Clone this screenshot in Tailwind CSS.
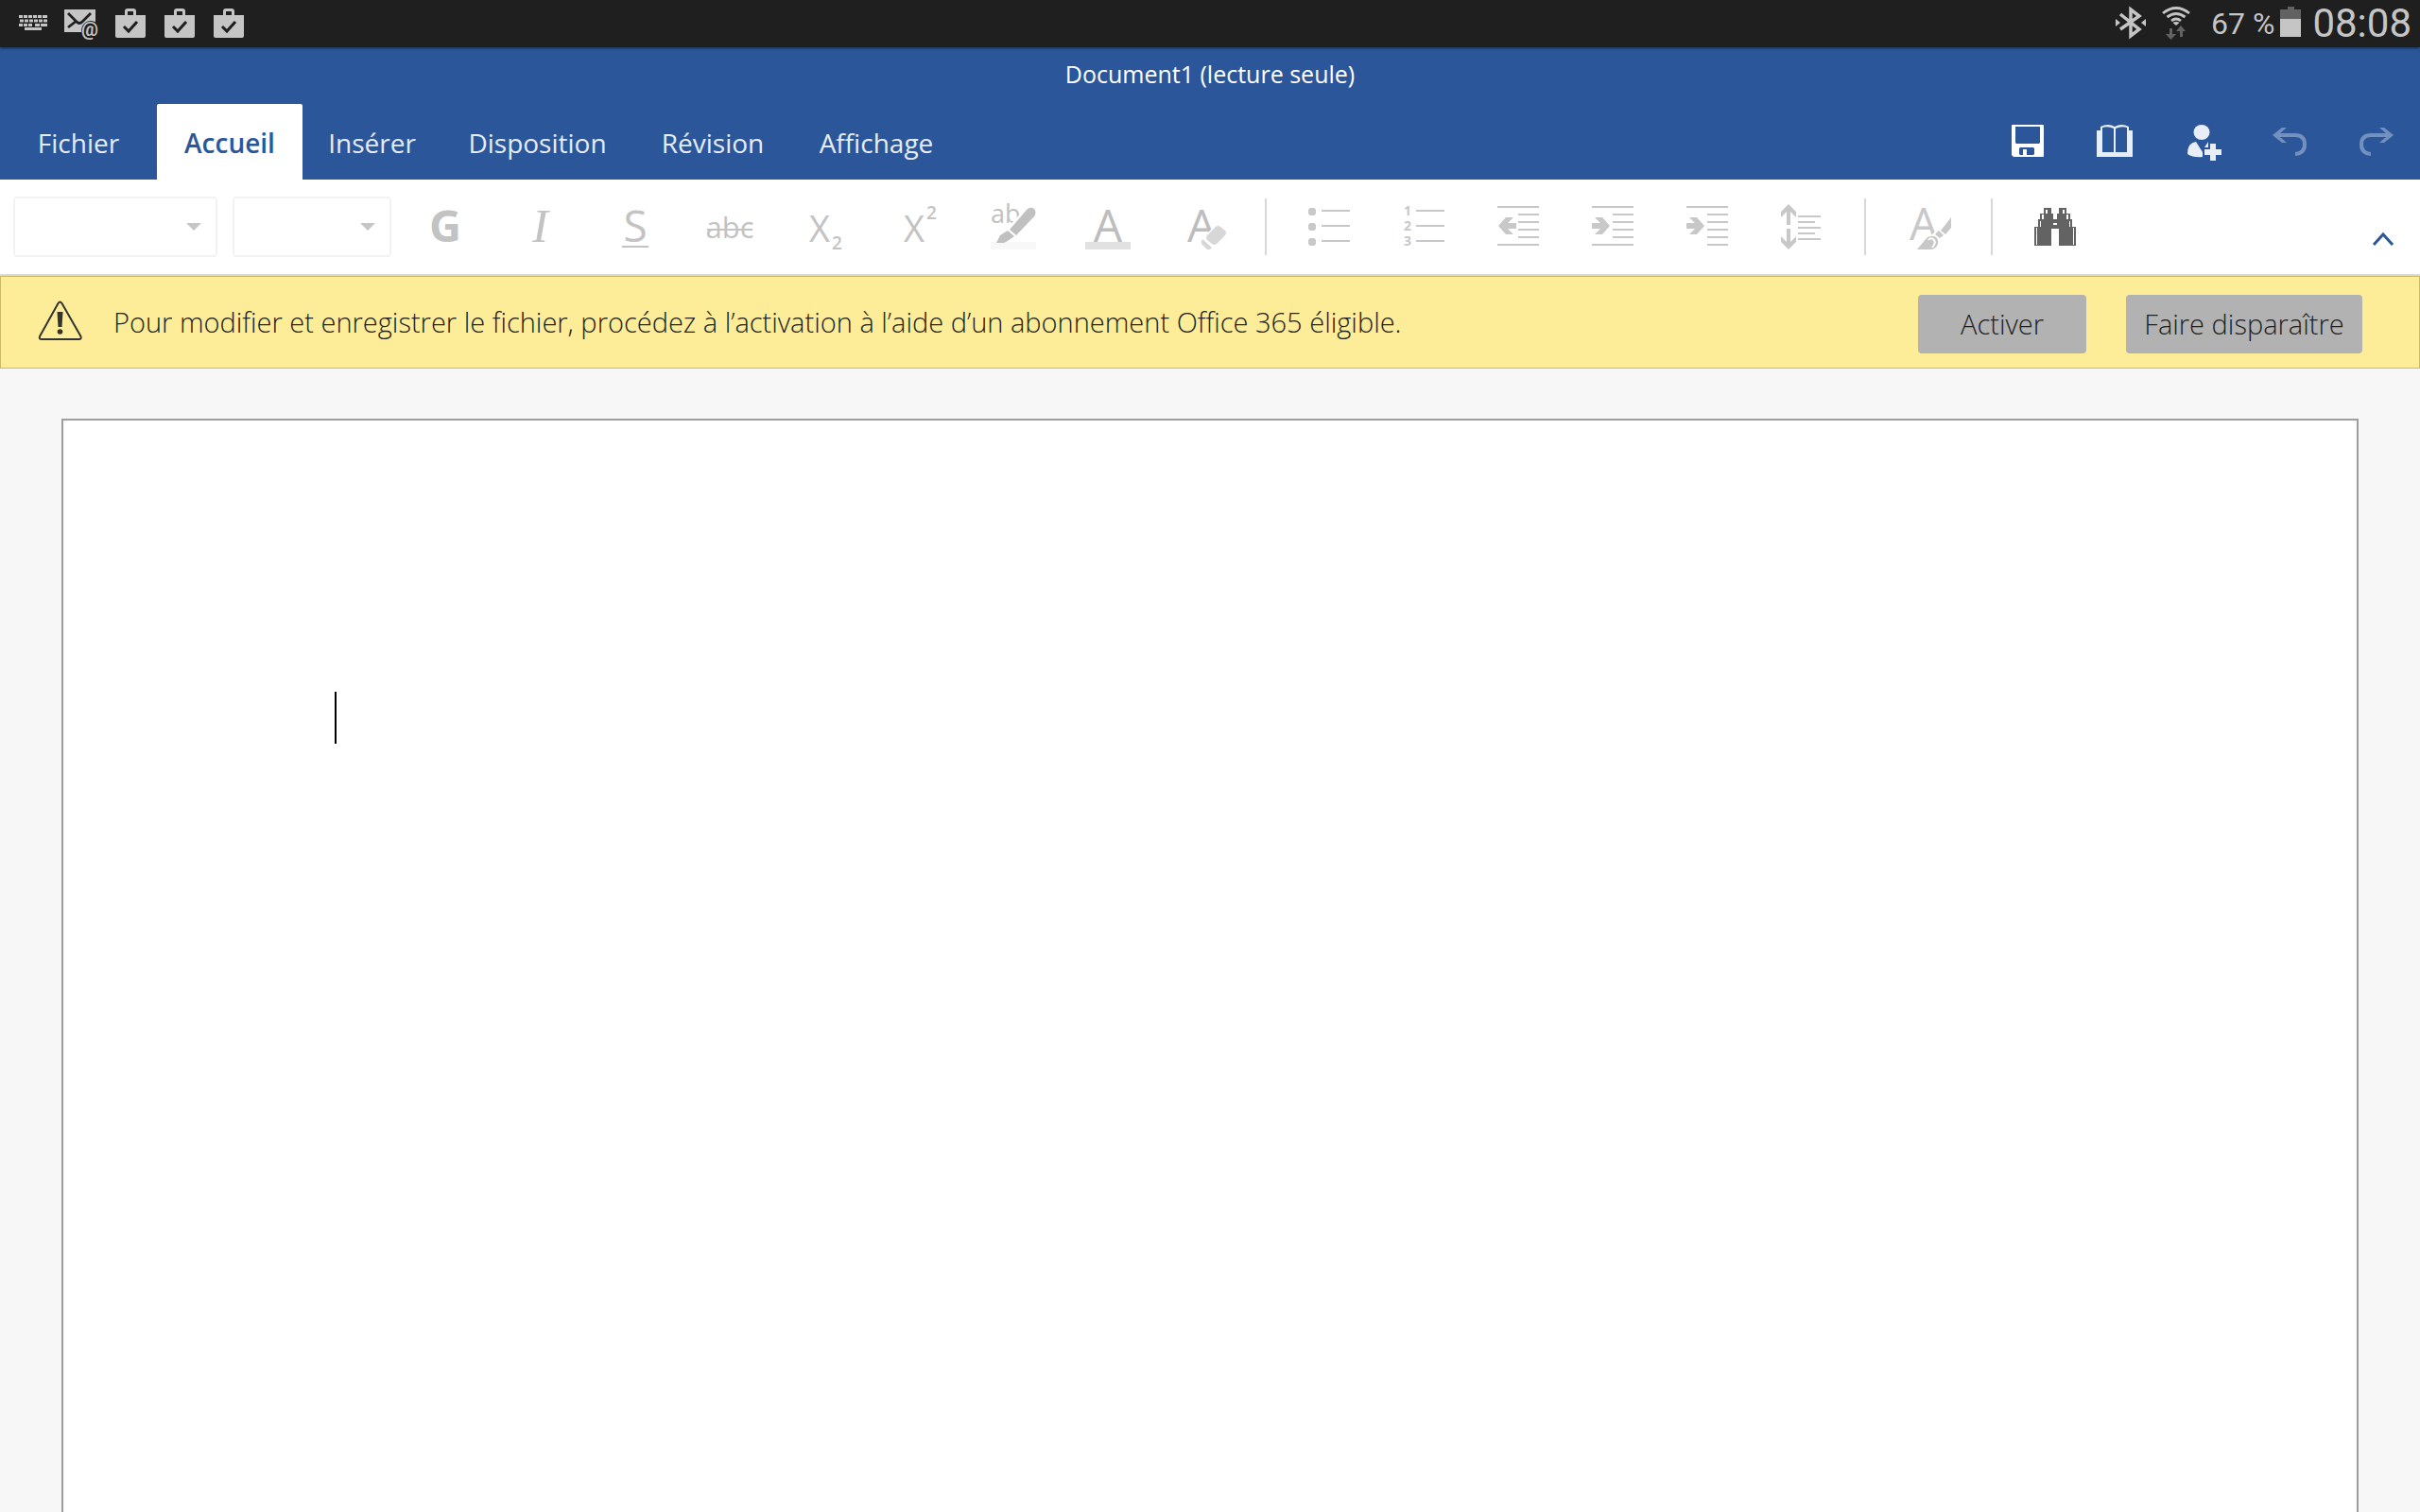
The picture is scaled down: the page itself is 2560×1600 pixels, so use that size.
<!DOCTYPE html>
<html lang="fr">
<head>
<meta charset="utf-8">
<meta name="viewport" content="width=device-width, initial-scale=1">
<title>Document1 (lecture seule)</title>
<script src="https://cdn.jsdelivr.net/npm/@tailwindcss/browser@4"></script>
</head>
<body class="flex min-h-screen flex-col bg-[#f7f7f7] font-['Open_Sans',sans-serif]">

<svg class="hidden">
  <symbol id="bag" viewBox="0 0 32 32">
    <path fill="#c5c5c5" fill-rule="evenodd" d="M10 7V3q0-3 3-3h6q3 0 3 3v4h10v22q0 2-2 2H2q-2 0-2-2V7zM13 7h6V3h-6z"/>
    <path fill="none" stroke="#1f1f1f" stroke-width="3" d="M9 19l5 5 9-10"/>
  </symbol>
  <symbol id="shortlines" viewBox="0 0 100 100">
    <path d="M28 28h44v2H28zM50 36h22v2H50zM50 44h22v2H50zM50 52h22v2H50zM50 60h22v2H50z"/>
  </symbol>
</svg>

<!-- Android status bar -->
<div class="relative z-10 flex h-[50px] items-center justify-between bg-[#1f1f1f] pl-5 pr-[9px] font-[Roboto,sans-serif] text-[#c5c5c5] shadow-[0_1px_3px_rgba(0,0,0,0.5)]">
  <div class="flex items-center gap-[18px]">
    <svg class="h-[50px] w-[30px]" viewBox="0 0 30 50" fill="none" stroke="#c5c5c5">
      <path stroke-width="3" stroke-dasharray="4 1" d="M0 17.500h19M1 22h24M0 26.500h14"/>
      <path stroke-width="3" d="M20 17.500h4M25 17.500h5M26 22h4M17 26.500h5M23 26.500h7M6 30.500h18"/>
    </svg>
    <svg class="h-[50px] w-[36px]" viewBox="0 0 36 50">
      <path fill="#c5c5c5" d="M0 10h33v24H0z"/>
      <path fill="none" stroke="#1f1f1f" stroke-width="2.800" d="M4 14l9 9q3 3 6 0l9-9M4 29l9-7"/>
      <circle cx="28" cy="32" r="10" fill="#1f1f1f"/>
      <text x="27" y="38" text-anchor="middle" font-size="20" font-weight="700" fill="#c5c5c5">@</text>
    </svg>
    <div class="flex gap-5">
      <svg class="h-8 w-8"><use href="#bag"/></svg>
      <svg class="h-8 w-8"><use href="#bag"/></svg>
      <svg class="h-8 w-8"><use href="#bag"/></svg>
    </div>
  </div>
  <div class="flex items-center">
    <svg class="mr-[17px] h-[50px] w-[32px]" viewBox="0 0 32 50">
      <path fill="none" stroke="#c5c5c5" stroke-width="3.500" d="M5 15l20 16-9 7V10l9 7L5 31"/>
      <path fill="#c5c5c5" d="M0 20l5 4-5 4zM32 20l-5 4 5 4z"/>
    </svg>
    <svg class="mr-[22px] h-[50px] w-[30px]" viewBox="0 0 30 50">
      <path fill="none" stroke="#c5c5c5" stroke-width="2.800" d="M1 14q14-11 28 0M5.500 18q9.500-7 19 0M10 22q5-4 10 0"/>
      <path fill="#c5c5c5" d="M11.500 24q3.500-2 7 0L15 27z"/>
      <path fill="#626262" d="M8 30h3v6h4l-5.500 6L4 36h4zM19 39v-6h-4l5-6 5 6h-3v6z"/>
    </svg>
    <span class="mr-[6px] text-[32px] leading-[50px]">67 %</span>
    <svg class="mr-[12px] h-[50px] w-[22px]" viewBox="0 0 22 50">
      <path fill="#626262" d="M8 7h7v3h7v10H0V10h8z"/>
      <path fill="#c5c5c5" d="M0 20h22v19H0z"/>
    </svg>
    <span class="text-[42px] leading-[48px]">08:08</span>
  </div>
</div>

<!-- Title and ribbon tabs -->
<header class="bg-[#2b579a]">
  <h1 class="h-[60px] text-center text-[25px] leading-[56px] text-white">Document1 (lecture seule)</h1>
  <div class="flex h-20 items-stretch justify-between">
    <nav class="flex text-[28px] leading-[82px] text-[#e6ecf6]">
      <a href="#" class="w-[166px] text-center">Fichier</a>
      <a href="#" class="w-[154px] rounded-t-xs bg-white text-center font-semibold text-[#2b579a]" aria-current="page">Accueil</a>
      <a href="#" class="w-[147px] text-center">Insérer</a>
      <a href="#" class="w-[203px] text-center">Disposition</a>
      <a href="#" class="w-[168px] text-center">Révision</a>
      <a href="#" class="w-[178px] text-center">Affichage</a>
    </nav>
    <div class="flex">
      <button class="w-[92px]" aria-label="Enregistrer"><svg class="h-20 w-[92px]" viewBox="0 0 92 80">
        <path fill="#fff" fill-rule="evenodd" d="M29 22h32q1 0 1 1v32q0 1-1 1H30l-2-2V23q0-1 1-1zM32 24v17l1 1h24l1-1V24zM37 46l-1 1v6l1 1h3v-6h4v6h7l1-1v-6l-1-1z"/>
      </svg></button>
      <button class="w-[92px]" aria-label="Mode lecture"><svg class="h-20 w-[92px]" viewBox="0 0 92 80">
        <path fill="#e8eef8" fill-rule="evenodd" d="M26 28h4v-4q8-4 15 0 7-4 15 0v4h4v28H26zM32 25v26h12V26q-6-3-12-1zM46 26v25h12V25q-6-2-12 1z"/>
      </svg></button>
      <button class="w-[92px]" aria-label="Partager"><svg class="h-20 w-[92px]" viewBox="0 0 92 80">
        <g fill="#e8eef8"><ellipse cx="45" cy="30" rx="8.500" ry="8"/>
        <path d="M39 40l7 11v5q-10 1-16-3 0-12 9-13zM52 40v6h-4zM54 42h6v6h6v6h-6v6h-6v-6h-6v-6h6z"/></g>
      </svg></button>
      <button class="w-[92px]" aria-label="Annuler" disabled><svg class="h-20 w-[92px]" viewBox="0 0 92 80">
        <path fill="#7390bf" d="M28 33l10-8h5l-7 6h16q12 0 12 12 0 11-12 12v-4q8-1 8-8 0-8-8-8H36l7 6h-5z"/>
      </svg></button>
      <button class="w-[92px]" aria-label="Rétablir" disabled><svg class="h-20 w-[92px]" viewBox="0 0 92 80">
        <path fill="#7390bf" d="M64 33l-10-8h-5l7 6H40q-12 0-12 12 0 11 12 12v-4q-8-1-8-8 0-8 8-8h16l-7 6h5z"/>
      </svg></button>
    </div>
  </div>
</header>

<!-- Formatting toolbar -->
<div class="flex h-[102px] items-center border-b-2 border-[#d8d8d8] bg-white pl-[14px]">
  <div class="relative mr-4 h-16 w-[216px]">
    <select class="h-full w-full appearance-none rounded-sm border-2 border-[#f2f2f2] bg-white" aria-label="Police" disabled></select>
    <svg class="pointer-events-none absolute right-[17px] top-7 h-2 w-4" viewBox="0 0 16 8"><path fill="#c6c6c6" d="M0 0h16L8 8z"/></svg>
  </div>
  <div class="relative mr-2 h-16 w-[168px]">
    <select class="h-full w-full appearance-none rounded-sm border-2 border-[#f2f2f2] bg-white" aria-label="Taille de police" disabled></select>
    <svg class="pointer-events-none absolute right-[17px] top-7 h-2 w-4" viewBox="0 0 16 8"><path fill="#c6c6c6" d="M0 0h16L8 8z"/></svg>
  </div>
  <div class="flex" role="group" aria-label="Police">
    <button aria-label="Gras" disabled><svg class="size-[100px]" viewBox="0 0 100 100" fill="#c3c3c3"><text x="32" y="66" font-size="47" font-weight="700">G</text></svg></button>
    <button aria-label="Italique" disabled><svg class="size-[100px] font-['Liberation_Serif',serif]" viewBox="0 0 100 100" fill="#c3c3c3"><text x="41" y="66" font-size="51" font-style="italic">I</text></svg></button>
    <button aria-label="Souligné" disabled><svg class="size-[100px]" viewBox="0 0 100 100" fill="#c3c3c3"><text x="50" y="66" text-anchor="middle" font-size="46">S</text><path d="M36 70h28v2H36z"/></svg></button>
    <button aria-label="Barré" disabled><svg class="size-[100px]" viewBox="0 0 100 100" fill="#c3c3c3"><text x="50" y="62" text-anchor="middle" font-size="31">abc</text><path d="M26 52h48v2H26z"/></svg></button>
    <button aria-label="Indice" disabled><svg class="size-[100px]" viewBox="0 0 100 100" fill="#c3c3c3"><text x="45" y="66" text-anchor="middle" font-size="38">X</text><text x="58" y="74" font-size="19" font-weight="600">2</text></svg></button>
    <button aria-label="Exposant" disabled><svg class="size-[100px]" viewBox="0 0 100 100" fill="#c3c3c3"><text x="45" y="66" text-anchor="middle" font-size="38">X</text><text x="58" y="42" font-size="19" font-weight="600">2</text></svg></button>
    <button aria-label="Surlignage" disabled><svg class="size-[100px]" viewBox="0 0 100 100" fill="#c0c0c0">
      <text x="26" y="46" font-size="27">ab</text>
      <path fill="#f8f8f8" d="M26 66h48v8H26z"/>
      <path fill="#fff" d="M43 52L62 31h8v10L50 60z"/>
      <path d="M46 53L64 32q4-4 8-1 3 4 0 8L53 59zM44 54l7 6-7 5-4 2h-8l4-8z"/>
    </svg></button>
    <button aria-label="Couleur de police" disabled><svg class="size-[100px]" viewBox="0 0 100 100" fill="#bdbdbd"><text x="50" y="66" text-anchor="middle" font-size="48">A</text><path fill="#e1e1e1" d="M26 66h48v8H26z"/></svg></button>
    <button aria-label="Effacer la mise en forme" disabled><svg class="size-[100px]" viewBox="0 0 100 100" fill="#bdbdbd">
      <text x="34" y="66" font-size="48">A</text>
      <path fill="#fff" d="M48 64L64 48l12 8v16l-14 4z"/>
      <path fill="#d7d7d7" d="M55 59l9-9q3-2 5 0l5 4q2 2 0 5l-9 9q-2 2-5 0l-5-4q-2-2 0-5zM50 63l10 9-2 2h-3l-6-6v-3z"/>
    </svg></button>
  </div>
  <div class="mx-4 h-[60px] w-[2px] bg-[#d8d8d8]"></div>
  <div class="flex" role="group" aria-label="Paragraphe">
    <button aria-label="Puces" disabled><svg class="size-[100px]" viewBox="0 0 100 100" fill="#c8c8c8"><rect x="28" y="30" width="8" height="8" rx="3"/><rect x="28" y="46" width="8" height="8" rx="3"/><rect x="28" y="62" width="8" height="8" rx="3"/><path d="M42 32h30v2H42zM42 48h30v2H42zM42 64h30v2H42z"/></svg></button>
    <button aria-label="Numérotation" disabled><svg class="size-[100px]" viewBox="0 0 100 100" fill="#c8c8c8"><g font-size="14" font-weight="700"><text x="29" y="38">1</text><text x="29" y="54">2</text><text x="29" y="70">3</text></g><path d="M42 32h30v2H42zM42 48h30v2H42zM42 64h30v2H42z"/></svg></button>
    <button aria-label="Diminuer le retrait" disabled><svg class="size-[100px]" viewBox="0 0 100 100" fill="#c8c8c8"><use href="#shortlines"/><path d="M28 68h44v2H28zM29 49l8-9h8l-6 6h9v6h-9l6 6h-8z"/></svg></button>
    <button aria-label="Augmenter le retrait" disabled><svg class="size-[100px]" viewBox="0 0 100 100" fill="#c8c8c8"><use href="#shortlines"/><path d="M28 68h44v2H28zM47 49l-8-9h-8l6 6h-9v6h9l-6 6h8z"/></svg></button>
    <button aria-label="Retrait spécial" disabled><svg class="size-[100px]" viewBox="0 0 100 100" fill="#c8c8c8"><use href="#shortlines"/><path d="M50 68h22v2H50zM47 49l-8-9h-8l6 6h-9v6h9l-6 6h8z"/></svg></button>
    <button aria-label="Interligne" disabled><svg class="size-[100px]" viewBox="0 0 100 100" fill="#c8c8c8"><path d="M36 26l8 8v6l-6-6v14h-4V34l-6 6v-6zM36 74l8-8v-6l-6 6V52h-4v14l-6-6v6zM46 38h24v2H46zM46 44h18v2H46zM46 50h24v2H46zM46 56h18v2H46zM46 62h24v2H46z"/></svg></button>
  </div>
  <div class="mx-4 h-[60px] w-[2px] bg-[#d8d8d8]"></div>
  <button aria-label="Styles" disabled><svg class="size-[100px]" viewBox="0 0 100 100" fill="#c8c8c8">
    <text x="30" y="64" font-size="47">A</text>
    <path fill="#fff" d="M52 60l22-22v36H48z"/>
    <path d="M74 40v11l-6 7-5-4zM61 54l5 5-4 3-5-4zM38 74l10-12q3-3 8-2 5 2 4 8-2 6-8 6z"/>
    <path fill="none" stroke="#fff" stroke-width="2" d="M50 64q2-3 5-1 3 3 1 6l-2 3"/>
  </svg></button>
  <div class="mx-4 h-[60px] w-[2px] bg-[#d8d8d8]"></div>
  <button aria-label="Rechercher"><svg class="size-[100px]" viewBox="0 0 100 100">
    <path fill="#636363" d="M38 30h8v6h2v6h4v-6h2v-6h8v6h4v6h2v8h4v20H54V52h-8v18H28V50h4v-8h2v-6h4z"/>
    <path fill="#fff" d="M40 32h2v4h-2zM58 32h2v4h-2zM36 37h2v5h-2zM62 37h2v5h-2zM34 44h1v6h-1zM65 44h1v6h-1zM30 51h1v18h-1zM69 51h1v18h-1zM48 46h4v2h-4z"/>
  </svg></button>
  <button class="ml-auto pr-[27px] pt-[26px]" aria-label="Réduire le ruban"><svg class="h-4 w-6" viewBox="0 0 24 16"><path fill="none" stroke="#2b579a" stroke-width="3" d="M2 14L12 3l10 11"/></svg></button>
</div>

<!-- Read-only notice -->
<section class="flex h-[98px] items-center border border-[#cdb964] bg-[#feed98] pl-[39px] pr-[60px] text-[29px] font-light text-[#222]">
  <svg class="mr-[32px] h-[50px] w-[48px] shrink-0" viewBox="0 0 48 50" fill="none" stroke="#333" stroke-width="2">
    <path stroke-linejoin="round" d="M21.500 5q2-3 4 0l20 35q1 3-2 3H4q-3 0-2-3z"/>
    <path fill="#333" stroke="none" d="M20.500 14h6l-1 16h-4z"/><circle cx="23.500" cy="35" r="2.800" fill="#333" stroke="none"/>
  </svg>
  <p>Pour modifier et enregistrer le fichier, procédez à l’activation à l’aide d’un abonnement Office 365 éligible.</p>
  <div class="ml-auto flex gap-[42px] pt-1">
    <button class="h-[62px] w-[178px] rounded-sm bg-[#b2b2b2]">Activer</button>
    <button class="h-[62px] w-[250px] rounded-sm bg-[#b2b2b2]">Faire disparaître</button>
  </div>
</section>

<!-- Document page -->
<main class="flex flex-1 flex-col px-[65px] pt-[53px]">
  <div class="flex-1 border-2 border-b-0 border-[#9d9d9d] bg-white px-[287px] pt-[287px]" role="textbox" aria-label="Document">
    <div class="h-[55px] w-[2px] bg-black"></div>
  </div>
</main>
</body>
</html>
